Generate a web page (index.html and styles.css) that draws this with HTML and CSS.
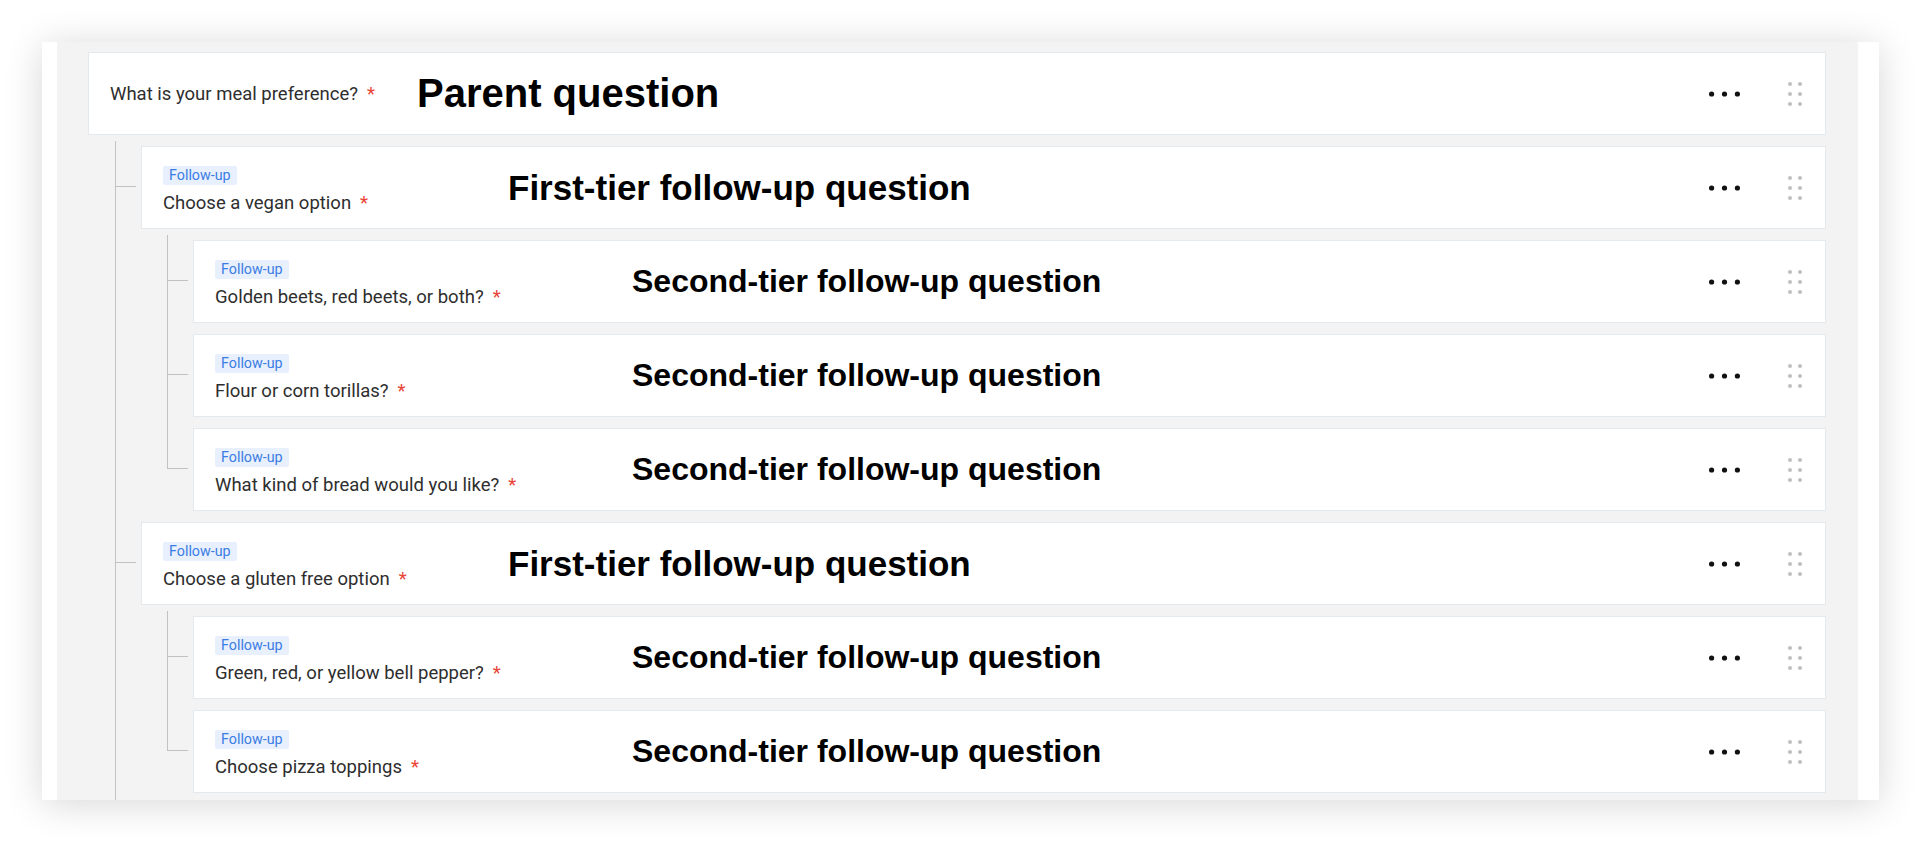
FILE: index.html
```html
<!DOCTYPE html>
<html lang="en">
<head>
    <meta charset="UTF-8">
    <meta name="viewport" content="width=device-width, initial-scale=1.0">
    <title>Follow-up questions</title>
    <link rel="stylesheet" href="styles.css">
</head>
<body>
    <div class="frame">
        <div class="board">
            <ul class="tree">
                <li>
                    <div class="card card-root">
                        <div class="q-body">
                            <p class="q-title">What is your meal preference?<span class="req">*</span></p>
                        </div>
                        <span class="note note-root">Parent question</span>
                        <svg class="more" viewBox="0 0 31 6"><circle cx="2.6" cy="3" r="2.6"/><circle cx="15.5" cy="3" r="2.6"/><circle cx="28.4" cy="3" r="2.6"/></svg>
                        <svg class="grip" viewBox="0 0 14 24"><circle cx="2" cy="2" r="2"/><circle cx="12" cy="2" r="2"/><circle cx="2" cy="12" r="2"/><circle cx="12" cy="12" r="2"/><circle cx="2" cy="22" r="2"/><circle cx="12" cy="22" r="2"/></svg>
                    </div>

                    <ul class="children continues">
                        <li>
                            <div class="card card-t1">
                                <div class="q-body follow">
                                    <span class="tag">Follow-up</span>
                                    <p class="q-title">Choose a vegan option<span class="req">*</span></p>
                                </div>
                                <span class="note note-t1">First-tier follow-up question</span>
                                <svg class="more" viewBox="0 0 31 6"><circle cx="2.6" cy="3" r="2.6"/><circle cx="15.5" cy="3" r="2.6"/><circle cx="28.4" cy="3" r="2.6"/></svg>
                                <svg class="grip" viewBox="0 0 14 24"><circle cx="2" cy="2" r="2"/><circle cx="12" cy="2" r="2"/><circle cx="2" cy="12" r="2"/><circle cx="12" cy="12" r="2"/><circle cx="2" cy="22" r="2"/><circle cx="12" cy="22" r="2"/></svg>
                            </div>
                            <ul class="children">
                                <li>
                                    <div class="card card-t2">
                                        <div class="q-body follow">
                                            <span class="tag">Follow-up</span>
                                            <p class="q-title">Golden beets, red beets, or both?<span class="req">*</span></p>
                                        </div>
                                        <span class="note note-t2">Second-tier follow-up question</span>
                                        <svg class="more" viewBox="0 0 31 6"><circle cx="2.6" cy="3" r="2.6"/><circle cx="15.5" cy="3" r="2.6"/><circle cx="28.4" cy="3" r="2.6"/></svg>
                                        <svg class="grip" viewBox="0 0 14 24"><circle cx="2" cy="2" r="2"/><circle cx="12" cy="2" r="2"/><circle cx="2" cy="12" r="2"/><circle cx="12" cy="12" r="2"/><circle cx="2" cy="22" r="2"/><circle cx="12" cy="22" r="2"/></svg>
                                    </div>
                                </li>
                                <li>
                                    <div class="card card-t2">
                                        <div class="q-body follow">
                                            <span class="tag">Follow-up</span>
                                            <p class="q-title">Flour or corn torillas?<span class="req">*</span></p>
                                        </div>
                                        <span class="note note-t2">Second-tier follow-up question</span>
                                        <svg class="more" viewBox="0 0 31 6"><circle cx="2.6" cy="3" r="2.6"/><circle cx="15.5" cy="3" r="2.6"/><circle cx="28.4" cy="3" r="2.6"/></svg>
                                        <svg class="grip" viewBox="0 0 14 24"><circle cx="2" cy="2" r="2"/><circle cx="12" cy="2" r="2"/><circle cx="2" cy="12" r="2"/><circle cx="12" cy="12" r="2"/><circle cx="2" cy="22" r="2"/><circle cx="12" cy="22" r="2"/></svg>
                                    </div>
                                </li>
                                <li>
                                    <div class="card card-t2">
                                        <div class="q-body follow">
                                            <span class="tag">Follow-up</span>
                                            <p class="q-title">What kind of bread would you like?<span class="req">*</span></p>
                                        </div>
                                        <span class="note note-t2">Second-tier follow-up question</span>
                                        <svg class="more" viewBox="0 0 31 6"><circle cx="2.6" cy="3" r="2.6"/><circle cx="15.5" cy="3" r="2.6"/><circle cx="28.4" cy="3" r="2.6"/></svg>
                                        <svg class="grip" viewBox="0 0 14 24"><circle cx="2" cy="2" r="2"/><circle cx="12" cy="2" r="2"/><circle cx="2" cy="12" r="2"/><circle cx="12" cy="12" r="2"/><circle cx="2" cy="22" r="2"/><circle cx="12" cy="22" r="2"/></svg>
                                    </div>
                                </li>
                            </ul>
                        </li>

                        <li>
                            <div class="card card-t1">
                                <div class="q-body follow">
                                    <span class="tag">Follow-up</span>
                                    <p class="q-title">Choose a gluten free option<span class="req">*</span></p>
                                </div>
                                <span class="note note-t1">First-tier follow-up question</span>
                                <svg class="more" viewBox="0 0 31 6"><circle cx="2.6" cy="3" r="2.6"/><circle cx="15.5" cy="3" r="2.6"/><circle cx="28.4" cy="3" r="2.6"/></svg>
                                <svg class="grip" viewBox="0 0 14 24"><circle cx="2" cy="2" r="2"/><circle cx="12" cy="2" r="2"/><circle cx="2" cy="12" r="2"/><circle cx="12" cy="12" r="2"/><circle cx="2" cy="22" r="2"/><circle cx="12" cy="22" r="2"/></svg>
                            </div>
                            <ul class="children">
                                <li>
                                    <div class="card card-t2">
                                        <div class="q-body follow">
                                            <span class="tag">Follow-up</span>
                                            <p class="q-title">Green, red, or yellow bell pepper?<span class="req">*</span></p>
                                        </div>
                                        <span class="note note-t2">Second-tier follow-up question</span>
                                        <svg class="more" viewBox="0 0 31 6"><circle cx="2.6" cy="3" r="2.6"/><circle cx="15.5" cy="3" r="2.6"/><circle cx="28.4" cy="3" r="2.6"/></svg>
                                        <svg class="grip" viewBox="0 0 14 24"><circle cx="2" cy="2" r="2"/><circle cx="12" cy="2" r="2"/><circle cx="2" cy="12" r="2"/><circle cx="12" cy="12" r="2"/><circle cx="2" cy="22" r="2"/><circle cx="12" cy="22" r="2"/></svg>
                                    </div>
                                </li>
                                <li>
                                    <div class="card card-t2">
                                        <div class="q-body follow">
                                            <span class="tag">Follow-up</span>
                                            <p class="q-title">Choose pizza toppings<span class="req">*</span></p>
                                        </div>
                                        <span class="note note-t2">Second-tier follow-up question</span>
                                        <svg class="more" viewBox="0 0 31 6"><circle cx="2.6" cy="3" r="2.6"/><circle cx="15.5" cy="3" r="2.6"/><circle cx="28.4" cy="3" r="2.6"/></svg>
                                        <svg class="grip" viewBox="0 0 14 24"><circle cx="2" cy="2" r="2"/><circle cx="12" cy="2" r="2"/><circle cx="2" cy="12" r="2"/><circle cx="12" cy="12" r="2"/><circle cx="2" cy="22" r="2"/><circle cx="12" cy="22" r="2"/></svg>
                                    </div>
                                </li>
                            </ul>
                        </li>
                    </ul>
                </li>
            </ul>
        </div>
    </div>
</body>
</html>
```

FILE: styles.css
```css
* {
    box-sizing: border-box;
}

body {
    margin: 0;
    padding: 42px;
    background-color: #fff;
    font-family: Roboto, "Noto Sans", sans-serif;
}

.frame {
    height: 758px;
    padding: 0 21px 0 15px;
    background-color: #fff;
    box-shadow: 0 4px 36px rgba(0, 0, 0, 0.16);
}

.board {
    height: 100%;
    padding: 10px 32px 0 31px;
    background-color: #f3f3f3;
    overflow: hidden;
}

.tree,
.children {
    list-style: none;
    margin: 0;
    padding: 0;
}

/* nested questions + the connector lines */
.children {
    margin-top: 11px;
    padding-left: 53px;
}
.children .children {
    padding-left: 52px;
}
.children > li {
    position: relative;
}
.children > li + li {
    margin-top: 11px;
}
.children > li::before {
    content: "";
    position: absolute;
    left: -26px;
    top: -11px;
    bottom: 0;
    border-left: 1px solid #c2c2c2;
}
.children > li:first-child::before {
    top: -5px;
}
.children > li:last-child::before {
    bottom: auto;
    height: 51px;
}
.children.continues > li:last-child::before {
    bottom: -20px;
    height: auto;
}
.children > li::after {
    content: "";
    position: absolute;
    left: -26px;
    top: 40px;
    width: 21px;
    border-top: 1px solid #c2c2c2;
}

.card {
    display: flex;
    align-items: center;
    height: 83px;
    padding: 0 23px 0 21px;
    background-color: #fff;
    border: 1px solid #e3e9ec;
}

.q-body {
    flex: none;
    display: flex;
    flex-direction: column;
}
.q-body.follow {
    margin-top: 6px;
    gap: 6px;
}
.card-root .q-body {
    width: 307px;
}
.card-t1 .q-body {
    width: 345px;
}
.card-t2 .q-body {
    width: 417px;
}

.tag {
    align-self: flex-start;
    padding: 0 6px;
    font-size: 14.3px;
    line-height: 19px;
    color: #3b7de3;
    background-color: #e8f0fd;
    border-radius: 2px;
}

.q-title {
    margin: 0;
    font-size: 18.5px;
    line-height: 24px;
    color: #2e2e2e;
    white-space: nowrap;
}

.req {
    margin-left: 9px;
    color: #ea4335;
}

.note {
    font-family: "Liberation Sans", Arial, sans-serif;
    font-weight: 700;
    color: #000;
    white-space: nowrap;
}
.note-root {
    font-size: 40px;
}
.note-t1 {
    font-size: 35px;
}
.note-t2 {
    font-size: 32px;
}

.more {
    margin-left: auto;
    width: 31px;
    height: 6px;
    fill: #111;
}

.grip {
    margin-left: 48px;
    width: 14px;
    height: 24px;
    fill: #c0c0c0;
}
```
